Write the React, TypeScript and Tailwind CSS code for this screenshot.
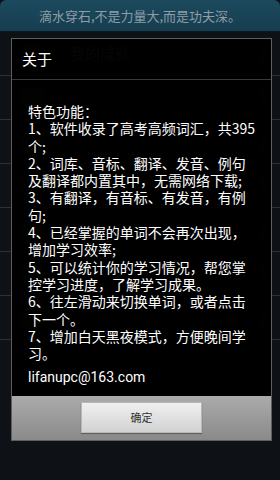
import React from "react";

const lines = [
  "特色功能：",
  "1、软件收录了高考高频词汇，共395",
  "个;",
  "2、词库、音标、翻译、发音、例句",
  "及翻译都内置其中，无需网络下载;",
  "3、有翻译，有音标、有发音，有例",
  "句;",
  "4、已经掌握的单词不会再次出现，",
  "增加学习效率;",
  "5、可以统计你的学习情况，帮您掌",
  "控学习进度，了解学习成果。",
  "6、往左滑动来切换单词，或者点击",
  "下一个。",
  "7、增加白天黑夜模式，方便晚间学",
  "习。",
];

function Chevron() {
  return (
    <svg width="10" height="18" viewBox="0 0 10 18" className="text-[#3a3f45]">
      <path d="M1 1 L9 9 L1 17" fill="none" stroke="currentColor" strokeWidth="1.5" />
    </svg>
  );
}

export default function App() {
  const rows = ["我的成就", "", "", "", "", "", ""];
  return (
    <div
      className="relative w-[280px] h-[480px] overflow-hidden bg-[#0e1216]"
      style={{ fontFamily: '"Noto Sans CJK SC", "Noto Sans", sans-serif' }}
    >
      <div className="h-[32px] rounded-tl-[6px] rounded-tr-[6px] bg-gradient-to-b from-[#1d4a5e] to-[#163d4f] flex items-center justify-center border-b border-[#0a1a22]">
        <span className="text-[13px] text-[#8e9ea6]">滴水穿石,不是力量大,而是功夫深。</span>
      </div>
      <div className="flex flex-col">
        {rows.map((t, i) => (
          <div
            key={i}
            className="h-[44px] border-b border-[#2a3036] flex items-center pl-[20px] pr-[12px]"
          >
            <div className="w-[24px] h-[24px] rounded-full bg-[#2a2520]" />
            <span className="ml-[26px] text-[15px] text-[#6a6a6a] flex-1">{t}</span>
            <Chevron />
          </div>
        ))}
      </div>

      <div className="absolute left-[11px] top-[38px] w-[261px] h-[403px] border border-[#5e5e5e] bg-black/[0.95] flex flex-col">
        <div className="h-[41px] flex items-center pl-[10px] border-b border-[#3a3a3a]">
          <span className="text-[15px] text-white">关于</span>
        </div>
        <div className="flex-1 pl-[16px] pt-[23px] text-[14px] leading-[17.3px] text-white">
          {lines.map((l, i) => (
            <div key={i} className="whitespace-nowrap">{l}</div>
          ))}
          <div
            className="mt-[7px] text-[14px] leading-[17px]"
            style={{ fontFamily: 'Roboto, "Noto Sans", sans-serif' }}
          >
            lifanupc@163.com
          </div>
        </div>
        <div className="h-[44px] bg-gradient-to-b from-[#ababab] to-[#8a8a8a] flex items-center justify-center">
          <button className="w-[121px] h-[31px] bg-gradient-to-b from-[#f0f0f0] to-[#d2d2d2] border border-[#b8b8b8] shadow-[0_1px_1px_rgba(0,0,0,0.3)] text-[11px] text-[#333] mb-[1px]">
            确定
          </button>
        </div>
      </div>
    </div>
  );
}
